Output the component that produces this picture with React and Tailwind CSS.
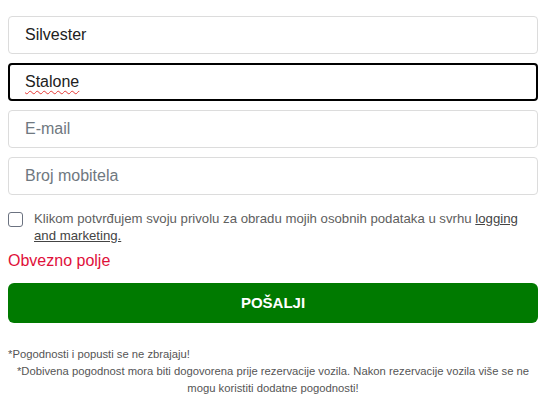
import React from 'react'

const inputCls =
  'block h-[38px] w-full rounded-[4px] border border-[#dcdcdc] bg-white px-4 text-[16px] text-[#212121] placeholder:text-[#6f7880] outline-none'

export default function App() {
  return (
    <div className="min-h-screen bg-white pl-2 pr-[6px] pt-4 font-['Liberation_Sans',Arial,sans-serif]">
      <div className="flex flex-col gap-[9px]">
        <input className={inputCls} readOnly defaultValue="Silvester" />
        <div className="flex h-[38px] w-full items-center rounded-[4px] border-2 border-black bg-white px-[15px] text-[16px] text-[#212121]">
          <span className="underline decoration-wavy decoration-[#e53935] decoration-1 underline-offset-[3px]">
            Stalone
          </span>
        </div>
        <input className={inputCls} readOnly placeholder="E-mail" />
        <input className={inputCls} readOnly placeholder="Broj mobitela" />
      </div>

      <label className="mt-[15px] flex items-start gap-[11px]">
        <span className="mt-[2px] block h-[15px] w-[15px] shrink-0 rounded-[3px] border border-[#6b7280] bg-white" />
        <span className="text-[13.2px] leading-[17px] text-[#606060]">
          Klikom potvrđujem svoju privolu za obradu mojih osobnih podataka u svrhu{' '}
          <span className="text-[#444] underline">logging and marketing.</span>
        </span>
      </label>

      <div className="mt-[7px] text-[16px] leading-[20px] text-[#e0103a]">Obvezno polje</div>

      <button
        type="button"
        className="mt-[12px] flex h-[40px] w-full items-center justify-center rounded-[6px] bg-[#007a00] text-[15px] font-bold text-white"
      >
        POŠALJI
      </button>

      <div className="mt-[23px] text-[11.25px] leading-[17px] text-[#555]">
        <p>*Pogodnosti i popusti se ne zbrajaju!</p>
        <p className="text-center">
          *Dobivena pogodnost mora biti dogovorena prije rezervacije vozila. Nakon rezervacije vozila više se ne mogu
          koristiti dodatne pogodnosti!
        </p>
      </div>
    </div>
  )
}
